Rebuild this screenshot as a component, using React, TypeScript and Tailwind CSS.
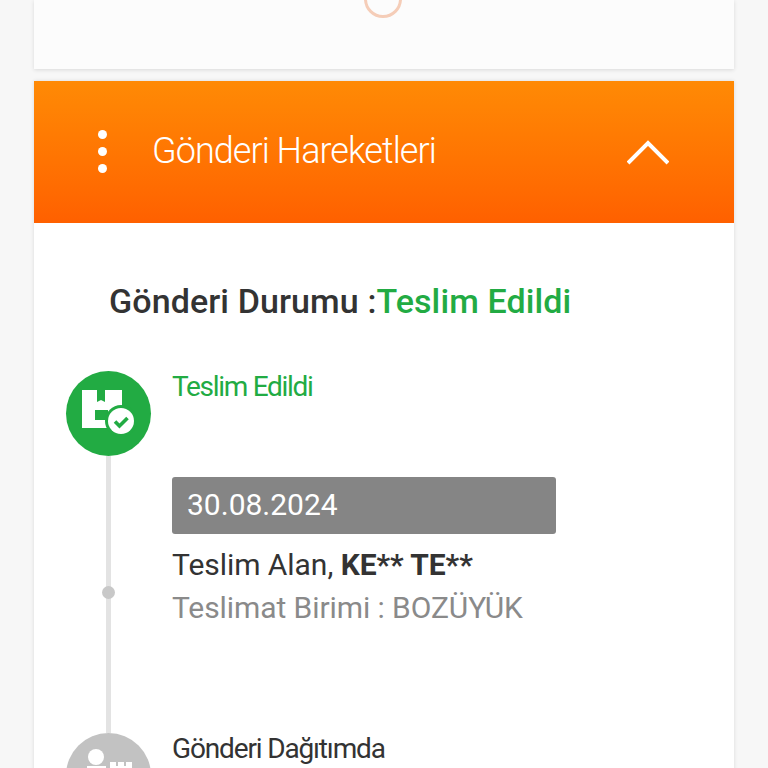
const DeliveredIcon = () => (
  <svg width="85" height="85" viewBox="0 0 85 85">
    <path d="M16 19h40v38H16z" fill="#fff" />
    <path d="M31 19h8v12l-4-2-4 2z" fill="#22ab43" />
    <path d="M29 39h13v10H29z" fill="#22ab43" />
    <circle cx="55" cy="50" r="16" fill="#22ab43" />
    <circle cx="55" cy="50" r="13" fill="#fff" />
    <path d="M49 50.5l4.5 4.5 8-8" fill="none" stroke="#22ab43" strokeWidth="3.6" />
  </svg>
);

const OnRouteIcon = () => (
  <svg width="85" height="85" viewBox="0 0 85 85">
    <circle cx="30" cy="24" r="8" fill="#fff" />
    <path d="M21 33h19v13H21z" fill="#fff" />
    <path d="M44 29h6v4h2v-4h6v4h2v-4h6v16H44z" fill="#fff" />
  </svg>
);

const App = () => {
  return (
    <div className="h-[768px] overflow-hidden bg-[#f7f7f7] px-[34px] font-['Roboto',sans-serif]">
      {/* Top card */}
      <div className="flex h-[69px] justify-center overflow-hidden bg-[#fcfcfc] pr-[2px] shadow-[0_1px_4px_rgba(0,0,0,0.12)]">
        <div className="mt-[-20px] h-[38px] w-[38px] rounded-full border-[3px] border-[#f5cdb8]" />
      </div>

      {/* Gönderi Hareketleri */}
      <div className="mt-3 bg-white shadow-[0_0_4px_rgba(0,0,0,0.12)]">
        <div className="flex h-[142px] items-center bg-gradient-to-b from-[#ff8a05] to-[#ff6000] pl-[64px] pr-[65px] text-white">
          <div className="flex flex-col gap-[8px] pb-[2px]">
            <span className="h-[9px] w-[9px] rounded-full bg-white" />
            <span className="h-[9px] w-[9px] rounded-full bg-white" />
            <span className="h-[9px] w-[9px] rounded-full bg-white" />
          </div>
          <span className="ml-[45px] flex-1 pb-[2px] text-[36px] font-light tracking-[-0.95px]">Gönderi Hareketleri</span>
          <svg width="42" height="26" viewBox="0 0 42 26" fill="none" stroke="#fff" strokeWidth="4">
            <path d="M1 24L21 4l20 20" />
          </svg>
        </div>

        <div className="h-[600px] pl-[32px] pt-[57px]">
          <h2 className="pl-[43px] text-[34px] font-medium leading-[42px] tracking-[0.1px] text-[#333]">
            Gönderi Durumu :<span className="text-[#22ab43]">Teslim Edildi</span>
          </h2>

          <div className="mt-[49px] flex">
            <div className="flex w-[85px] flex-col items-center">
              <div className="h-[85px] w-[85px] rounded-full bg-[#22ab43]">
                <DeliveredIcon />
              </div>
              <div className="relative w-[5px] flex-1 bg-[#e3e3e3]">
                <span className="absolute left-[-4px] top-[130px] h-[13px] w-[13px] rounded-full bg-[#c8c8c8]" />
              </div>
            </div>
            <div className="h-[362px] pl-[21px]">
              <p className="text-[28px] leading-[32px] tracking-[-1.3px] text-[#22ab43]">Teslim Edildi</p>
              <div className="mt-[74px] flex h-[57px] w-[384px] items-center rounded-[3px] bg-[#858585] px-[15px] pb-[2px] text-[30px] text-white">
                30.08.2024
              </div>
              <p className="mt-[11px] text-[30px] leading-[40px] tracking-[-0.05px] text-[#333]">
                Teslim Alan, <b className="font-bold">KE** TE**</b>
              </p>
              <p className="mt-[3px] text-[30px] leading-[40px] tracking-[-0.08px] text-[#8a8a8a]">Teslimat Birimi : BOZÜYÜK</p>
            </div>
          </div>

          <div className="flex">
            <div className="h-[85px] w-[85px] rounded-full bg-[#c2c2c2]">
              <OnRouteIcon />
            </div>
            <p className="pl-[21px] text-[28px] leading-[32px] tracking-[-1.15px] text-[#333]">Gönderi Dağıtımda</p>
          </div>
        </div>
      </div>
    </div>
  );
};

export default App;
